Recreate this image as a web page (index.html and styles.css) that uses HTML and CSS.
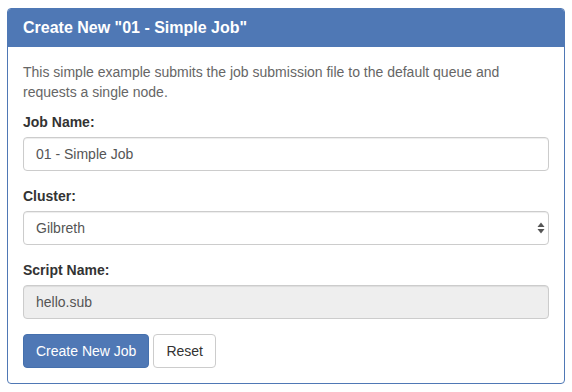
FILE: index.html
```html
<!DOCTYPE html>
<html lang="en">
<head>
    <meta charset="UTF-8">
    <title>Create New Job</title>
    <link rel="stylesheet" href="styles.css">
</head>
<body>

<div class="panel">
    <div class="panel-heading">
        <h3 class="panel-title">Create New "01 - Simple Job"</h3>
    </div>
    <div class="panel-body">
        <p class="help">This simple example submits the job submission file to the default queue and requests a single node.</p>
        <form>
            <div class="form-group">
                <label for="job-name">Job Name:</label>
                <input id="job-name" class="form-control" type="text" value="01 - Simple Job">
            </div>
            <div class="form-group">
                <label for="cluster">Cluster:</label>
                <div class="select-wrap">
                    <select id="cluster" class="form-control">
                        <option>Gilbreth</option>
                    </select>
                    <svg class="select-arrows" width="8" height="12" viewBox="0 0 8 12">
                        <path d="M4 0.5 L7.5 5 L0.5 5 Z" fill="#555"/>
                        <path d="M4 11.5 L7.5 7 L0.5 7 Z" fill="#555"/>
                    </svg>
                </div>
            </div>
            <div class="form-group">
                <label for="script-name">Script Name:</label>
                <input id="script-name" class="form-control" type="text" value="hello.sub" readonly>
            </div>
            <div class="actions">
                <button type="submit" class="btn btn-primary">Create New Job</button>
                <button type="reset" class="btn btn-default">Reset</button>
            </div>
        </form>
    </div>
</div>

</body>
</html>
```

FILE: styles.css
```css
* {
    box-sizing: border-box;
}

body {
    margin: 8px 7px;
    font-family: "Liberation Sans", Arial, sans-serif;
    font-size: 14px;
    line-height: 20px;
    color: #333;
    background: #fff;
}

.panel {
    border: 1px solid #4f78b5;
    border-radius: 4px;
    background: #fff;
}

.panel-heading {
    background-color: #4f78b5;
    color: #fff;
    padding: 10px 15px;
    border-radius: 3px 3px 0 0;
}

.panel-title {
    margin: 0;
    font-size: 16px;
    line-height: 18px;
    font-weight: bold;
}

.panel-body {
    padding: 15px;
}

.help {
    margin: 0 0 10px;
    color: #666;
}

form {
    margin: 0;
}

.form-group {
    margin-bottom: 15px;
}

label {
    display: block;
    margin-bottom: 5px;
    font-weight: bold;
}

.form-control {
    display: block;
    width: 100%;
    height: 34px;
    padding: 6px 12px;
    font-family: inherit;
    font-size: 14px;
    line-height: 20px;
    color: #555;
    background: #fff;
    border: 1px solid #ccc;
    border-radius: 4px;
    box-shadow: inset 0 1px 1px rgba(0, 0, 0, 0.075);
    outline: none;
}

.form-control[readonly] {
    background-color: #eee;
}

.select-wrap {
    position: relative;
}

select.form-control {
    appearance: none;
    -webkit-appearance: none;
    padding-right: 24px;
}

.select-arrows {
    position: absolute;
    right: 4px;
    top: 11px;
    pointer-events: none;
}

.actions {
    display: flex;
    gap: 4px;
}

.btn {
    height: 34px;
    padding: 6px 12px;
    font-family: inherit;
    font-size: 14px;
    line-height: 20px;
    border: 1px solid transparent;
    border-radius: 4px;
    cursor: pointer;
}

.btn-primary {
    background-color: #4f78b5;
    border-color: #4570ad;
    color: #fff;
}

.btn-default {
    background-color: #fff;
    border-color: #ccc;
    color: #333;
}
```
